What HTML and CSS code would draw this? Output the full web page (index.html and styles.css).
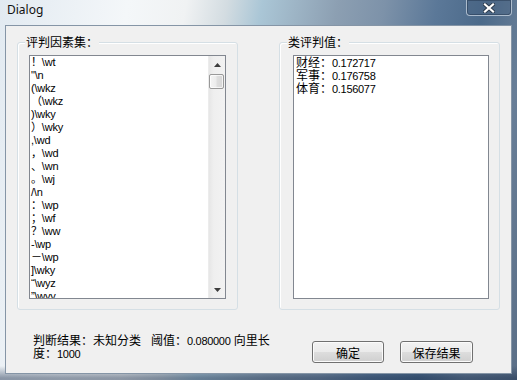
FILE: index.html
```html
<!DOCTYPE html>
<html lang="zh-CN">
<head>
  <meta charset="UTF-8" />
  <title>Dialog</title>
  <link rel="stylesheet" href="styles.css">
</head>
<body>

  <div class="window">
    <div class="titlebar">
      <span class="title">Dialog</span>
      <button class="close-btn" title="关闭">
        <svg width="12" height="10" viewBox="0 0 12 10">
          <path d="M2 1.5 L10 8.5 M10 1.5 L2 8.5" stroke="#2b3a4c" stroke-width="4" stroke-linecap="square"/>
          <path d="M2 1.5 L10 8.5 M10 1.5 L2 8.5" stroke="#fff" stroke-width="2.2" stroke-linecap="square"/>
        </svg>
      </button>
    </div>

    <div class="client">
      <div class="groups">
        <div class="group group-left">
          <span class="group-label">评判因素集：</span>
          <div class="listbox">
            <ul class="items">
              <li>！\wt</li>
              <li>"\n</li>
              <li>(\wkz</li>
              <li>（\wkz</li>
              <li>)\wky</li>
              <li>）\wky</li>
              <li>,\wd</li>
              <li>，\wd</li>
              <li>、\wn</li>
              <li>。\wj</li>
              <li>/\n</li>
              <li>：\wp</li>
              <li>；\wf</li>
              <li>？\ww</li>
              <li>-\wp</li>
              <li>－\wp</li>
              <li>]\wky</li>
              <li>“\wyz</li>
              <li>”\wyy</li>
            </ul>
            <div class="scrollbar">
              <div class="arrow">
                <svg width="7" height="4" viewBox="0 0 7 4"><polygon points="3.5,0 7,4 0,4" fill="#3c3c3c"/></svg>
              </div>
              <div class="thumb"></div>
              <div class="track"></div>
              <div class="arrow">
                <svg width="7" height="4" viewBox="0 0 7 4"><polygon points="0,0 7,0 3.5,4" fill="#3c3c3c"/></svg>
              </div>
            </div>
          </div>
        </div>

        <div class="group group-right">
          <span class="group-label">类评判值：</span>
          <div class="listbox results">
            <div class="result">财经：<span class="num">0.172717</span></div>
            <div class="result">军事：<span class="num">0.176758</span></div>
            <div class="result">体育：<span class="num">0.156077</span></div>
          </div>
        </div>
      </div>

      <div class="footer">
        <p class="status">判断结果：未知分类&nbsp;&nbsp;&nbsp;阈值：<span class="num">0.080000</span> 向里长度：<span class="num">1000</span></p>
        <div class="buttons">
          <button class="btn">确定</button>
          <button class="btn">保存结果</button>
        </div>
      </div>
    </div>
  </div>

</body>
</html>
```

FILE: styles.css
```css
* { box-sizing: border-box; margin: 0; padding: 0; }

html, body {
  width: 517px;
  height: 380px;
  overflow: hidden;
}

body {
  font-family: "Liberation Sans", "Noto Sans CJK SC", sans-serif;
  font-size: 12px;
  color: #000;
  background:
    linear-gradient(to bottom, rgba(20, 40, 70, 0) 0, rgba(20, 40, 70, 0) 366px, rgba(20, 40, 70, 0.45) 378px),
    linear-gradient(100deg, #e2eaf1 0%, #f4f7f9 22%, #f0f2f3 32%, #d3dce1 39%, #aac6d6 45%, #9db4c5 51%, #8c9fb2 58%, #7d92a9 66%, #5b7898 75%, #4c6a8a 83%, #687e97 91%, #5a6e86 100%);
}

.window {
  display: flex;
  flex-direction: column;
  height: 100%;
  padding: 0 5px 6px;
}

/* title bar */
.titlebar {
  height: 25px;
  display: flex;
  justify-content: space-between;
  align-items: flex-start;
  padding-left: 2px;
}

.title {
  font-family: "Noto Sans", "Open Sans", sans-serif;
  font-size: 12px;
  line-height: 16px;
  padding-top: 2px;
  color: #111;
}

.close-btn {
  width: 46px;
  height: 17px;
  margin-top: -1px;
  display: flex;
  align-items: center;
  justify-content: center;
  padding-top: 1px;
  border: 1px solid rgba(235, 242, 250, 0.6);
  border-radius: 0 0 4px 4px;
  background: rgba(70, 95, 125, 0.35);
  box-shadow: inset 0 0 0 1px rgba(20, 35, 55, 0.35);
  cursor: pointer;
}

/* client area */
.client {
  flex: 1;
  display: flex;
  flex-direction: column;
  background-color: #f0f0f0;
  border: 1px solid #8595a6;
}

.groups {
  display: flex;
  gap: 41px;
  padding: 16px 11px 0;
}

.group {
  position: relative;
  width: 221px;
  height: 268px;
  border: 1px solid #d5dfe5;
  border-radius: 3px;
  box-shadow: inset 1px 1px 0 #fff;
  padding: 12px 11px 10px;
}

.group-right {
  padding: 12px 10px 10px 13px;
}

.group-label {
  position: absolute;
  top: -6px;
  left: 7px;
  padding: 0 1px;
  line-height: 13px;
  background-color: #f0f0f0;
}

.listbox {
  height: 100%;
  display: flex;
  border: 1px solid #828790;
  background-color: #fff;
}

.items {
  flex: 1;
  list-style: none;
  overflow: hidden;
  padding: 0 1px;
  font-size: 11px;
  line-height: 13px;
  letter-spacing: -0.2px;
  white-space: nowrap;
}

.scrollbar {
  width: 17px;
  display: flex;
  flex-direction: column;
  background: linear-gradient(to right, #e6e6e6, #efefef 30%, #f2f2f2);
  border-left: 1px solid #ececec;
}

.arrow {
  height: 17px;
  display: flex;
  align-items: center;
  justify-content: center;
}

.thumb {
  height: 15px;
  margin: 1px 1px 0 0;
  border: 1px solid #999;
  border-radius: 2px;
  background: linear-gradient(to right, #f4f4f4, #ececec 45%, #dedede 55%, #d6d6d6);
  box-shadow: inset 0 0 0 1px rgba(255, 255, 255, 0.7);
}

.track {
  flex: 1;
}

.results {
  flex-direction: column;
  padding: 1px 2px;
  line-height: 13px;
}

.num {
  font-size: 11px;
  line-height: 1;
  letter-spacing: -0.3px;
}

/* bottom bar */
.footer {
  display: flex;
  align-items: flex-start;
  margin-top: 25px;
  padding: 0 38px 0 27px;
}

.status {
  width: 242px;
  line-height: 13px;
}

.buttons {
  display: flex;
  gap: 16px;
  margin-left: auto;
  margin-top: 6px;
}

.btn {
  width: 72px;
  height: 22px;
  font-family: inherit;
  font-size: 12px;
  color: #000;
  border: 1px solid #707070;
  border-radius: 3px;
  background: linear-gradient(to bottom, #f2f2f2 0%, #ebebeb 48%, #dddddd 52%, #cfcfcf 100%);
  box-shadow: inset 0 0 0 1px #fbfbfb;
  cursor: pointer;
}

.btn + .btn {
  width: 73px;
}
```
